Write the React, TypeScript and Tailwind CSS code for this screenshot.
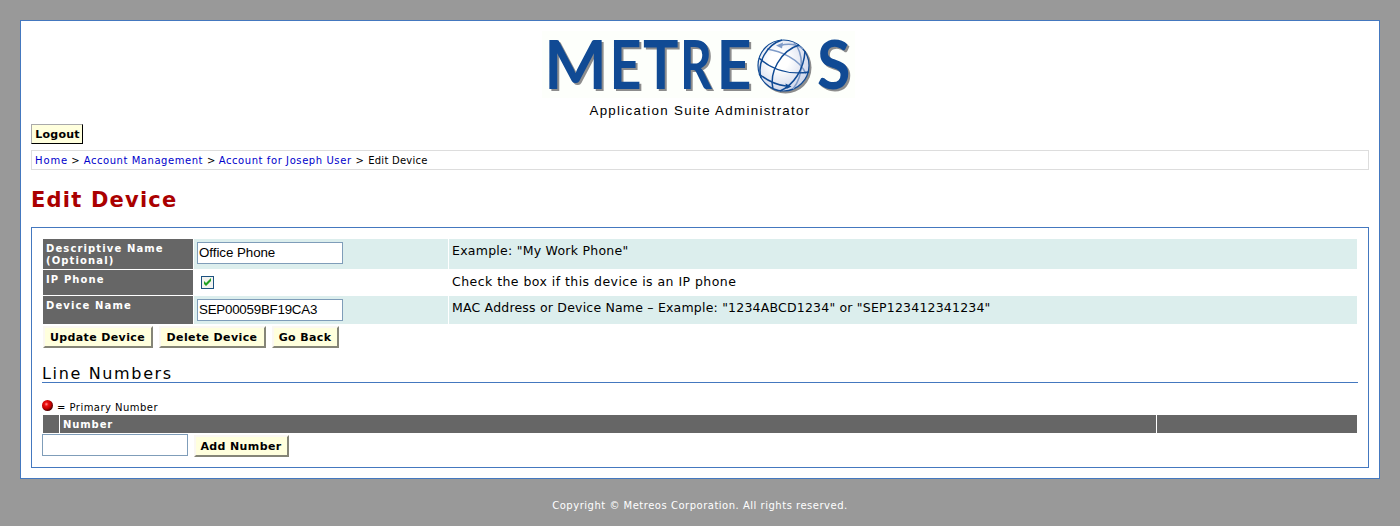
import React from 'react';

const LETTERS = [
  { c: 'M', x: 1.5, w: 63 },
  { c: 'E', x: 67, w: 32 },
  { c: 'T', x: 100.5, w: 35.5 },
  { c: 'R', x: 137.5, w: 32 },
  { c: 'E', x: 174, w: 35 },
  { c: 'S', x: 274.5, w: 33.5 },
];

function Logo() {
  return (
    <svg width="313" height="67" viewBox="0 0 313 67" className="mr-[4px] block overflow-visible bg-[#fdfffb]">
      <g fill="#104a94" className="font-['Lato'] text-[67px] font-bold [filter:drop-shadow(2px_2px_0_#8d8d8d)]">
        {LETTERS.map((l, i) => (
          <text key={i} x={l.x + 0.5} y={57.5} textLength={l.w} lengthAdjust="spacingAndGlyphs">
            {l.c}
          </text>
        ))}
      </g>
      <defs>
        <radialGradient id="globe" cx="0.42" cy="0.4" r="0.62">
          <stop offset="0.3" stopColor="#ffffff" />
          <stop offset="1" stopColor="#cfd6ea" />
        </radialGradient>
      </defs>
      <circle cx="243.5" cy="36.5" r="26" fill="#8d8d8d" />
      <circle cx="241.5" cy="34.5" r="25.5" fill="url(#globe)" stroke="#104a94" strokeWidth="1.2" />
      <g fill="none" stroke="#7f9bc8" strokeWidth="1.5">
        <path d="M238 14.500 Q252 11 261 18" />
        <path d="M225 18 C238 20 258 28 264 43" />
        <path d="M252 12 C262 22 262 44 251 58" />
      </g>
      <path d="M234 14.500 l7 -3 l-1 6 z" fill="#7f9bc8" />
      <g fill="none" stroke="#104a94" strokeWidth="1.5">
        <path d="M257 14 C238 20 227 42 231 58" />
        <path d="M240 9 C224 14 215 32 219 47" />
        <path d="M263 20 C262 38 252 54 238 60" />
        <path d="M217 27 C230 39 248 44 267 41" />
        <path d="M217 43 C226 50 234 54 244 55" />
      </g>
      <path d="M249.500 55.500 l-6 -3 l1 5.500 z" fill="#104a94" />
    </svg>
  );
}

function Row({ label, field, help, shade, h }: { label: React.ReactNode; field: React.ReactNode; help: React.ReactNode; shade: boolean; h: string }) {
  const bg = shade ? 'bg-[#dceeed]' : 'bg-white';
  return (
    <div className={`flex gap-px ${h}`}>
      <div className="w-[150px] shrink-0 bg-[#666] pl-[3px] pt-[4px] text-[10px] font-bold leading-[12px] tracking-[1.12px] text-white">{label}</div>
      <div className={`w-[254px] shrink-0 pl-[3px] pt-[3px] ${bg}`}>{field}</div>
      <div className={`flex-1 pl-[3px] pt-[4px] text-[12.5px] leading-[16px] ${bg}`}>{help}</div>
    </div>
  );
}

function Field({ value, className = '' }: { value: string; className?: string }) {
  return (
    <input
      defaultValue={value}
      className={`block h-[22px] w-[146px] border border-[#7f9db9] bg-white px-px pb-px font-['Liberation_Sans',sans-serif] text-[13.33px] text-black outline-none ${className}`}
    />
  );
}

function Button({ children, w }: { children: string; w: string }) {
  return (
    <button className={`flex h-[22px] items-center justify-center whitespace-nowrap border-2 border-b-[#858577] border-l-[#fbf8f2] border-r-[#858577] border-t-[#fbf8f2] bg-[#ffffdd] pr-px pt-[2px] text-[11px] font-bold leading-[16px] tracking-[0.38px] ${w}`}>
      {children}
    </button>
  );
}

export default function App() {
  return (
    <div className="h-[526px] bg-[#999] p-5 font-['DejaVu_Sans',Verdana,sans-serif] text-black">
      <div className="flex h-[459px] flex-col border border-[#4478bf] bg-white px-[10px] pt-[10px]">
        <header className="flex flex-col items-center">
          <Logo />
          <div className="mt-[5px] h-[15px] whitespace-nowrap font-['Liberation_Sans',sans-serif] text-[13.33px] leading-[16px] tracking-[1.3px]">Application Suite Administrator</div>
        </header>
        <button className="mt-[6px] flex h-[20px] w-[52px] items-center justify-center whitespace-nowrap border border-b-black border-l-[#aaa] border-r-black border-t-[#aaa] bg-[#ffffdd] pl-px pt-[2px] text-[11px] font-bold leading-[16px] tracking-[0.25px]">Logout</button>
        <nav className="mt-[6px] flex h-[20px] items-center gap-[4px] whitespace-nowrap border border-[#ddd] pl-[3px] text-[10px] tracking-[0.2px]">
          <a className="tracking-[0.9px] text-[#0000cc]">Home</a>
          <span className="-ml-px">&gt;</span>
          <a className="tracking-[0.55px] text-[#0000cc]">Account Management</a>
          <span>&gt;</span>
          <a className="-ml-px tracking-[0.58px] text-[#0000cc]">Account for Joseph User</a>
          <span>&gt;</span>
          <span className="tracking-[0.25px]">Edit Device</span>
        </nav>
        <h1 className="mt-[16px] h-[28px] whitespace-nowrap text-[21px] font-bold leading-[28px] tracking-[1.2px] text-[#a00]">Edit Device</h1>
        <main className="mt-[13px] h-[241px] border border-[#4478bf] px-[10px] pt-[11px]">
          <div className="mx-px flex flex-col gap-px">
            <Row
              h="h-[30px]"
              shade
              label={<>Descriptive Name<br />(Optional)</>}
              field={<Field value="Office Phone" className="tracking-[-0.05px]" />}
              help={<span className="tracking-[0.25px]">Example: "My Work Phone"</span>}
            />
            <Row
              h="h-[25px]"
              shade={false}
              label="IP Phone"
              field={
                <svg width="13" height="13" className="ml-[4px] mt-[3px] block">
                  <rect x="0.5" y="0.5" width="12" height="12" fill="#f3f3ef" stroke="#1c5180" />
                  <path d="M3 5v3l2 2l5-5v-3l-5 5z" fill="#21a121" />
                </svg>
              }
              help={<span className="tracking-[0.45px]">Check the box if this device is an IP phone</span>}
            />
            <Row
              h="h-[28px]"
              shade
              label="Device Name"
              field={<Field value="SEP00059BF19CA3" className="tracking-[-0.23px]" />}
              help={<span className="tracking-[0.2px]">MAC Address or Device Name – Example: "1234ABCD1234" or "SEP123412341234"</span>}
            />
          </div>
          <div className="ml-px mt-[2px] flex gap-[6px]">
            <Button w="w-[110px]">Update Device</Button>
            <Button w="w-[107px]">Delete Device</Button>
            <Button w="w-[67px]">Go Back</Button>
          </div>
          <h2 className="mt-[14px] h-[21px] whitespace-nowrap border-b border-[#4478bf] text-[16px] leading-[24px] tracking-[1.65px]">Line Numbers</h2>
          <div className="mt-[17px] flex h-[15px] gap-[4px] whitespace-nowrap text-[10px] leading-[15px] tracking-[0.47px]">
            <svg width="11" height="11" className="block">
              <defs>
                <radialGradient id="ball" cx="0.4" cy="0.38" r="0.6">
                  <stop offset="0" stopColor="#ff9a9a" />
                  <stop offset="0.3" stopColor="#ee1111" />
                  <stop offset="0.7" stopColor="#c00000" />
                  <stop offset="1" stopColor="#500" />
                </radialGradient>
              </defs>
              <circle cx="5.500" cy="5.500" r="5.500" fill="url(#ball)" />
            </svg>
            <span>= Primary Number</span>
          </div>
          <div className="mx-px flex h-[18px] gap-px text-[10px] font-bold leading-[20px] tracking-[0.9px] text-white">
            <div className="w-[16px] bg-[#666]" />
            <div className="flex-1 bg-[#666] pl-[3px]">Number</div>
            <div className="w-[200px] bg-[#666]" />
          </div>
          <div className="mt-px flex gap-[6px]">
            <Field value="" />
            <div className="pt-px"><Button w="w-[95px]">Add Number</Button></div>
          </div>
        </main>
      </div>
      <footer className="mt-[19px] whitespace-nowrap text-center text-[10px] leading-[16px] tracking-[0.51px] text-white">Copyright © Metreos Corporation. All rights reserved.</footer>
    </div>
  );
}
